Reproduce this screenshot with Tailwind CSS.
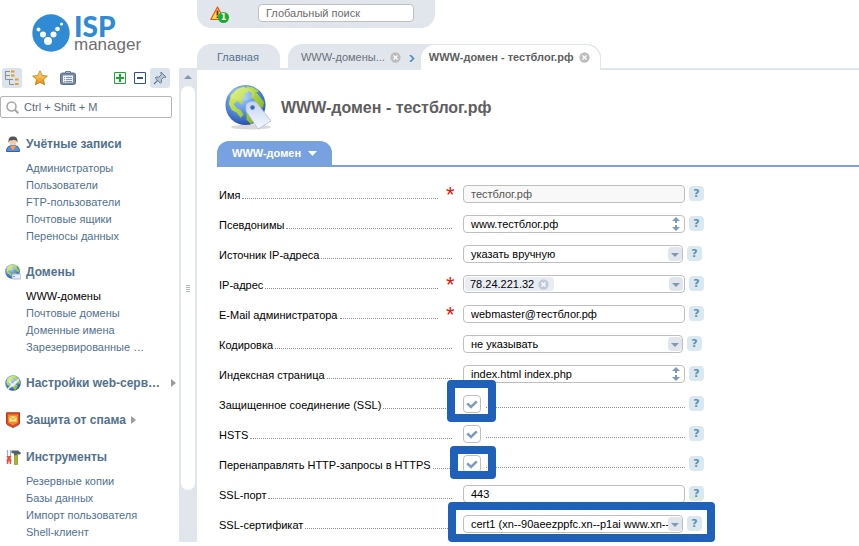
<!DOCTYPE html>
<html lang="ru">
<head>
<meta charset="utf-8">
<meta name="viewport" content="width=device-width, initial-scale=1">
<title>ISPmanager</title>
<script src="https://cdn.jsdelivr.net/npm/@tailwindcss/browser@4"></script>
</head>
<body class="bg-white font-['Liberation_Sans',Arial,sans-serif] text-[11px] leading-[17px] text-black">

<!-- Shared icons -->
<svg class="absolute size-0" aria-hidden="true">
  <defs>
    <radialGradient id="sea" cx="40%" cy="30%" r="75%"><stop offset="0" stop-color="#a8cffa"/><stop offset=".5" stop-color="#5a90e4"/><stop offset="1" stop-color="#2148a3"/></radialGradient>
    <linearGradient id="land" x1="0" y1="0" x2="1" y2="1"><stop offset="0" stop-color="#e3f56a"/><stop offset="1" stop-color="#6fae0c"/></linearGradient>
    <linearGradient id="tag" x1="0" y1="0" x2="0" y2="1"><stop offset="0" stop-color="#c3d4ef"/><stop offset="1" stop-color="#f6f9ff"/></linearGradient>
    <linearGradient id="gold" x1="0" y1="0" x2="0" y2="1"><stop offset="0" stop-color="#fde48a"/><stop offset="1" stop-color="#e88a05"/></linearGradient>
  </defs>
  <symbol id="globe" viewBox="0 0 42 42">
    <circle cx="21" cy="21" r="20.5" fill="url(#sea)"/>
    <path fill="url(#land)" d="M6 11l6-6 7-3 4 2 1 4-5 2 2 2-4 3 2 4-3 1-3-3-4 3 3 4 4 2 3 5-3 3-4-5-5-3-3-6zM22 2l7 1 6 4-3 1 4 5 4 5-1 6-5-2-4-6-3-3 1-4-5-3zM22 26l6-2 5 3-1 6-5 8-5-5z"/>
    <ellipse cx="17" cy="10" rx="13" ry="7" fill="#fff" opacity=".18"/>
  </symbol>
  <symbol id="updown" viewBox="0 0 8 14"><path fill="#7f9bbb" d="M4 0l4 4H5v2H3V4H0zM4 14l4-4H5V8H3v2H0z"/></symbol>
  <symbol id="down" viewBox="0 0 14 14"><rect width="14" height="14" rx="4" fill="#e1e6ed"/><path fill="#8197b8" d="M3 6h8l-4 4z"/></symbol>
  <symbol id="close" viewBox="0 0 12 12"><circle cx="6" cy="6" r="5.6" fill="currentColor"/><path d="M3.8 3.8l4.4 4.4M8.2 3.8L3.8 8.2" stroke="#fff" stroke-width="1.4"/></symbol>
  <symbol id="tri" viewBox="0 0 5 8"><path fill="#9b9b9b" d="M0 0l5 4-5 4z"/></symbol>
  <symbol id="check" viewBox="0 0 12 9"><path d="M1.2 3.4L5 7 10.8 1.4" fill="none" stroke="#7f9bbb" stroke-width="2.6"/></symbol>
</svg>

<div class="flex">
  <aside class="w-[179px] shrink-0">
    <a href="#" aria-label="ISP manager" class="flex h-[68px] items-start gap-1 pl-8 pt-[14px] leading-none">
      <svg class="size-[38px]" viewBox="0 0 38 38"><circle cx="19" cy="19" r="18.7" fill="#2f8bd4"/><g fill="#fff"><circle cx="6.500" cy="15.500" r="2"/><circle cx="11" cy="20.500" r="3"/><circle cx="16" cy="27" r="4"/><circle cx="21.500" cy="20.500" r="3"/><circle cx="25.500" cy="15" r="2.300"/><circle cx="29.500" cy="10" r="1.600"/></g></svg>
      <span class="flex flex-col">
        <span class="font-['Lato',sans-serif] text-[28px] font-black leading-6 text-[#2f8bd4]">ISP</span>
        <span class="font-['Liberation_Sans',sans-serif] text-[17px] leading-[14px] text-[#6f6f6f]">manager</span>
      </span>
    </a>
    <div class="flex h-5 items-center pl-[2px] pr-[9px]">
      <button type="button" aria-label="Дерево" class="flex size-5 items-center justify-center rounded-[3px] bg-[#dbe3ed]">
        <svg class="size-4" viewBox="0 0 16 16"><path d="M1.500 1v8.500M1.500 1.500H6M1.500 5.500H6M1.500 9.500H9M5.500 9.500v5M5.500 14.500H10" fill="none" stroke="#8b8f96"/><path fill="#e8a01c" d="M7 .500h3.500v2H7zM7 4.500h3.500v2H7zM11 8.500h3.500v2H11zM11 13h3.500v2H11z"/></svg>
      </button>
      <button type="button" aria-label="Избранное" class="ml-[10px]">
        <svg class="size-4" viewBox="0 0 16 16"><path d="M8 .8l2.200 4.700 5.200.6-3.900 3.500 1.100 5.200L8 12.300l-4.600 2.500 1.100-5.200L.6 6.100l5.200-.6z" fill="url(#gold)" stroke="#b8780f" stroke-width=".8"/></svg>
      </button>
      <button type="button" aria-label="История" class="ml-3">
        <svg class="size-4" viewBox="0 0 16 16"><path d="M5.500 3V1.500h5V3" fill="none" stroke="#6f8197"/><rect x=".5" y="3" width="15" height="11.500" rx="2" fill="#7489a3" stroke="#5a6d84"/><path d="M3 5.500h10v7H3z" fill="#edf2f7"/><path d="M4 7.500h1M6 7.500h6M4 9.500h1M6 9.500h6M4 11.500h1M6 11.500h6" stroke="#8495a9"/></svg>
      </button>
      <button type="button" aria-label="Развернуть всё" class="ml-auto">
        <svg class="size-3" viewBox="0 0 12 12"><path d="M.5.5h11v11H.5z" fill="#fff" stroke="#19a832"/><path d="M6 2v8M2 6h8" stroke="#19a832" stroke-width="2"/></svg>
      </button>
      <button type="button" aria-label="Свернуть всё" class="ml-2">
        <svg class="size-3" viewBox="0 0 12 12"><path d="M.5.5h11v11H.5z" fill="#fff" stroke="#2d5392"/><path d="M3 6h6" stroke="#2d5392" stroke-width="2"/></svg>
      </button>
      <button type="button" aria-label="Закрепить" class="ml-1 flex size-5 items-center justify-center rounded-[3px] bg-[#dbe3ed]">
        <svg class="size-[14px]" viewBox="0 0 14 14"><path d="M8 1l5 5-1.500.5-.8-.2-2.400 2.400.2 2.600-1 1L2.200 7l1-1 2.600.2 2.400-2.400L8 2.500z" fill="#b9c4d3" stroke="#66788f"/><path d="M4.500 9.500L1 13" stroke="#66788f" stroke-width="1.300"/></svg>
      </button>
    </div>
    <label class="mr-[7px] mt-2 flex h-[22px] items-center gap-[5px] rounded-[2px] border border-[#b5b5b5] pl-[5px]">
      <svg class="size-[13px] shrink-0" viewBox="0 0 13 13"><circle cx="5.500" cy="5.500" r="4.500" fill="none" stroke="#a5a5a5" stroke-width="1.500"/><path d="M8.800 8.800l3.500 3.500" stroke="#a5a5a5" stroke-width="2"/></svg>
      <input type="text" aria-label="Поиск по меню" placeholder="Ctrl + Shift + M" class="w-full min-w-0 outline-none placeholder:text-[#5c6b7c]">
    </label>

    <nav class="mt-4 flex flex-col gap-[17px] text-[#52718f]">
      <section>
        <h2 class="flex h-5 items-center gap-[5px] pl-[5px] text-[12px] font-bold">
          <svg class="size-4" viewBox="0 0 16 16"><path d="M1.500 15.500c0-4 2-6 6.500-6s6.500 2 6.500 6z" fill="#5c90df" stroke="#2f5fae"/><path d="M5 10l3 4.500 3-4.500z" fill="#ff9d3a"/><circle cx="8" cy="5.800" r="3.800" fill="#f4cda6"/><path d="M3.500 7C3 2 5 .5 8 .5s5 1.500 4.500 6.500C12 5 11 4 9.500 4S6 4.500 5 4.500 4 6 3.500 7z" fill="#555"/></svg>
          <a href="#">Учётные записи</a></h2>
        <ul class="mt-[6px] pl-[26px]">
          <li><a href="#">Администраторы</a></li>
          <li><a href="#">Пользователи</a></li>
          <li><a href="#">FTP-пользователи</a></li>
          <li><a href="#">Почтовые ящики</a></li>
          <li><a href="#">Переносы данных</a></li>
        </ul>
      </section>
      <section>
        <h2 class="flex h-5 items-center gap-[5px] pl-[5px] text-[12px] font-bold">
          <svg class="size-4" viewBox="0 0 16 16"><use href="#globe" width="15" height="15"/><rect x="7" y="10" width="9" height="5" rx="1" fill="#e9f0fb" stroke="#8fabd6" stroke-width=".8"/><circle cx="9" cy="12.500" r=".8" fill="#5680c0"/></svg>
          <a href="#">Домены</a></h2>
        <ul class="mt-[6px] pl-[26px]">
          <li><a href="#" class="text-black">WWW-домены</a></li>
          <li><a href="#">Почтовые домены</a></li>
          <li><a href="#">Доменные имена</a></li>
          <li><a href="#">Зарезервированные …</a></li>
        </ul>
      </section>
      <section>
        <h2 class="flex h-5 items-center gap-[5px] pl-[5px] pr-[3px] text-[12px] font-bold">
          <svg class="size-4 shrink-0" viewBox="0 0 16 16"><use href="#globe" width="16" height="16"/><path d="M4 6l4 5 6-7" fill="none" stroke="#dfe7f1" stroke-width="2"/><path d="M3 14l8-8" stroke="#eef3f9" stroke-width="1.500"/></svg>
          <a href="#" class="whitespace-nowrap">Настройки web-серв…</a>
          <svg class="ml-auto h-2 w-[5px] shrink-0"><use href="#tri"/></svg></h2>
      </section>
      <section>
        <h2 class="flex h-5 items-center gap-[5px] pl-[5px] text-[12px] font-bold">
          <svg class="size-4" viewBox="0 0 16 16"><path d="M1.500.8h13v10.500c0 1.700-3 2.500-6.500 4.200-3.500-1.700-6.500-2.500-6.500-4.200z" fill="#e2432c" stroke="#b93a12"/><path d="M3 2.500h10v8.300L8 13.500l-5-2.700z" fill="#f58a30"/><path d="M4 4h8v6H4z" fill="#fbe48b" stroke="#c98c16" stroke-width=".6"/><path d="M4 4l4 3.500L12 4" fill="none" stroke="#c98c16" stroke-width=".8"/></svg>
          <a href="#">Защита от спама</a>
          <svg class="h-2 w-[5px]"><use href="#tri"/></svg></h2>
      </section>
      <section>
        <h2 class="flex h-5 items-center gap-[5px] pl-[5px] text-[12px] font-bold">
          <svg class="size-4" viewBox="0 0 16 16"><path d="M2.500 1v6M5.500 1v6" stroke="#9fb3c8" stroke-width="1.300"/><path d="M1.500 7h5l-1 2.500 1 1.500-.5 4H4.800L4 11l-.8 4H2l-.5-4 1-1.500z" fill="#e2523c"/><path d="M6.500 1.500H13l3 2.500-1 1.500H12v1H9V4.500L6.500 4z" fill="#50606f"/><path d="M9.500 6h3v9.500h-3z" fill="#a8b820" stroke="#76820f" stroke-width=".6"/></svg>
          <a href="#">Инструменты</a></h2>
        <ul class="mt-[6px] pl-[26px]">
          <li><a href="#">Резервные копии</a></li>
          <li><a href="#">Базы данных</a></li>
          <li><a href="#">Импорт пользователя</a></li>
          <li><a href="#">Shell-клиент</a></li>
        </ul>
      </section>
    </nav>
  </aside>

  <!-- Scroll track between menu and page -->
  <div class="flex w-[18px] shrink-0 flex-col pt-[68px]">
    <div class="flex grow flex-col bg-[#e1e6ed] px-[2px] pb-[52px]">
      <button type="button" aria-label="Прокрутить вверх" class="flex h-[18px] items-center justify-center"><svg class="h-1 w-2" viewBox="0 0 8 4"><path fill="#8197b8" d="M4 0l4 4H0z"/></svg></button>
      <div class="flex grow items-center justify-center rounded-[7px] bg-white"><svg class="h-[7px] w-1" viewBox="0 0 4 7"><path d="M0 .5h4M0 2.500h4M0 4.500h4M0 6.500h4" stroke="#aab8ca"/></svg></div>
    </div>
  </div>

  <main class="min-w-0 grow pb-[3px]">
    <header class="flex h-7 w-[238px] items-start gap-[29px] rounded-b-[14px] bg-[#e1e6ed] pl-[13px] pt-[3px]">
      <button type="button" aria-label="Уведомления: 1" class="relative h-5 w-[19px] shrink-0">
        <svg class="size-[15px]" viewBox="0 0 15 15"><path d="M7.500 1l6.700 12.500H.8z" fill="#ffdf3d" stroke="#e0541f" stroke-width="1.200" stroke-linejoin="round"/><path d="M7.500 4.500v5M7.500 10.500V12" stroke="#7a1d0c" stroke-width="1.800"/></svg>
        <span class="absolute bottom-0 right-0 size-[11px] rounded-full bg-[#1bab30] text-center font-['DejaVu_Sans',sans-serif] text-[8px] font-bold leading-[11px] text-white">1</span>
      </button>
      <input type="search" aria-label="Глобальный поиск" placeholder="Глобальный поиск" class="mt-px h-[18px] w-[156px] rounded-[4px] border border-[#bfbfbf] bg-white px-[7px] outline-none placeholder:text-[#6b6b6b]">
    </header>

    <nav class="mt-4 flex h-[26px] items-end gap-2 border-b-2 border-[#e1e6ed]">
      <a href="#" class="flex h-6 items-center rounded-t-[14px] bg-[#e1e6ed] pl-5 pr-[21px] pt-[3px] text-[#52718f]">Главная</a>
      <div class="-mb-[2px] flex h-[26px] rounded-t-[14px] bg-[#e1e6ed] pl-[13px] pr-px pt-px">
        <a href="#" class="flex items-center text-[#6b7078]">WWW-домены...</a>
        <button type="button" aria-label="Закрыть вкладку" class="ml-[5px] text-[#bdbdbd]"><svg class="size-[11px]"><use href="#close"/></svg></button>
        <svg class="mx-2 mt-[10px] h-[7px] w-[6px]" viewBox="0 0 6 7"><path d="M1 0l3.500 3.500L1 7" fill="none" stroke="#4a8bb8" stroke-width="1.600"/></svg>
        <div class="-ml-[2px] flex items-center gap-[5px] rounded-t-[14px] bg-white pl-2 pr-[10px]">
          <a href="#" aria-current="page" class="font-bold text-[#5e5e5e]">WWW-домен - тестблог.рф</a>
          <button type="button" aria-label="Закрыть вкладку" class="text-[#bdbdbd]"><svg class="size-[11px]"><use href="#close"/></svg></button>
        </div>
      </div>
    </nav>

    <div class="flex h-[71px] items-center gap-2 pl-7 pt-[3px]">
      <svg class="h-[46px] w-12" viewBox="0 0 48 46"><ellipse cx="26" cy="43" rx="20" ry="2.500" fill="#000" opacity=".15"/><use href="#globe" width="41" height="42"/><path d="M21 21c1-3 8-5 11-2l14 18-13 8-12-18z" fill="url(#tag)" stroke="#a9bde0" stroke-width=".8"/><circle cx="27.500" cy="23.500" r="2.200" fill="#3c68b8"/></svg>
      <h1 class="text-[16px] font-bold text-[#5e5e5e]">WWW-домен - тестблог.рф</h1>
    </div>

    <div class="ml-5 flex border-b-2 border-[#78a2df]">
      <button type="button" class="flex h-6 items-center gap-[7px] rounded-t-[12px] bg-[#78a2df] px-[15px] font-bold text-white">WWW-домен <svg class="h-[5px] w-[9px]" viewBox="0 0 9 5"><path fill="#fff" d="M0 0h9L4.500 5z"/></svg></button>
    </div>

    <form class="pl-[22px] pt-3">
      <div class="flex h-[30px] items-center">
        <label for="name" class="flex w-[219px] items-baseline gap-[2px] pt-[2px]">Имя<span class="grow border-b border-dotted border-[#8c8c8c]"></span></label>
        <span class="w-[25px] pl-2 text-[22px] text-[#ee1111]">*</span>
        <input id="name" type="text" readonly value="тестблог.рф" class="h-[18px] w-[222px] rounded-[4px] border border-[#bfbfbf] bg-[#f8f8f8] px-[7px] text-[#555]">
        <button type="button" aria-label="Справка" class="mb-[2px] ml-1 size-[15px] rounded-[4px] bg-[#dbe8ef] font-['DejaVu_Sans',sans-serif] font-bold leading-[15px] text-[#5c91b0]">?</button>
      </div>
      <div class="flex h-[30px] items-center">
        <label for="alias" class="flex w-[233px] items-baseline gap-[2px] pt-[2px]">Псевдонимы<span class="grow border-b border-dotted border-[#8c8c8c]"></span></label>
        <span class="w-[11px]"></span>
        <span class="relative"><input id="alias" type="text" value="www.тестблог.рф" class="block h-[18px] w-[222px] rounded-[4px] border border-[#bfbfbf] pl-[7px] pr-4"><svg class="absolute right-[5px] top-[2px] h-[14px] w-2"><use href="#updown"/></svg></span>
        <button type="button" aria-label="Справка" class="mb-[2px] ml-1 size-[15px] rounded-[4px] bg-[#dbe8ef] font-['DejaVu_Sans',sans-serif] font-bold leading-[15px] text-[#5c91b0]">?</button>
      </div>
      <div class="flex h-[30px] items-center">
        <label for="source" class="flex w-[233px] items-baseline gap-[2px] pt-[2px]">Источник IP-адреса<span class="grow border-b border-dotted border-[#8c8c8c]"></span></label>
        <span class="w-[11px]"></span>
        <span class="relative"><select id="source" class="block h-[18px] w-[220px] appearance-none rounded-[4px] border border-[#bfbfbf] bg-white pl-[7px] pr-[14px] leading-4"><option>указать вручную</option></select><svg class="pointer-events-none absolute right-px top-[2px] size-[14px]"><use href="#down"/></svg></span>
        <button type="button" aria-label="Справка" class="mb-[2px] ml-1 size-[15px] rounded-[4px] bg-[#dbe8ef] font-['DejaVu_Sans',sans-serif] font-bold leading-[15px] text-[#5c91b0]">?</button>
      </div>
      <div class="flex h-[30px] items-center">
        <label for="ip" class="flex w-[219px] items-baseline gap-[2px] pt-[2px]">IP-адрес<span class="grow border-b border-dotted border-[#8c8c8c]"></span></label>
        <span class="w-[25px] pl-2 text-[22px] text-[#ee1111]">*</span>
        <div class="flex h-[18px] w-[222px] items-center rounded-[4px] border border-[#bfbfbf] px-px">
          <span class="flex h-[14px] items-center gap-1 rounded-[4px] bg-[#e9edf3] px-[5px]">78.24.221.32<button type="button" aria-label="Удалить адрес" class="text-[#c0cad9]"><svg class="size-[11px]"><use href="#close"/></svg></button></span>
          <input id="ip" type="text" class="w-0 min-w-0 grow outline-none">
          <button type="button" aria-label="Открыть список"><svg class="size-[14px]"><use href="#down"/></svg></button>
        </div>
        <button type="button" aria-label="Справка" class="mb-[2px] ml-1 size-[15px] rounded-[4px] bg-[#dbe8ef] font-['DejaVu_Sans',sans-serif] font-bold leading-[15px] text-[#5c91b0]">?</button>
      </div>
      <div class="flex h-[30px] items-center">
        <label for="email" class="flex w-[219px] items-baseline gap-[2px] pt-[2px]">E-Mail администратора<span class="grow border-b border-dotted border-[#8c8c8c]"></span></label>
        <span class="w-[25px] pl-2 text-[22px] text-[#ee1111]">*</span>
        <input id="email" type="text" value="webmaster@тестблог.рф" class="h-[18px] w-[222px] rounded-[4px] border border-[#bfbfbf] px-[7px]">
        <button type="button" aria-label="Справка" class="mb-[2px] ml-1 size-[15px] rounded-[4px] bg-[#dbe8ef] font-['DejaVu_Sans',sans-serif] font-bold leading-[15px] text-[#5c91b0]">?</button>
      </div>
      <div class="flex h-[30px] items-center">
        <label for="charset" class="flex w-[233px] items-baseline gap-[2px] pt-[2px]">Кодировка<span class="grow border-b border-dotted border-[#8c8c8c]"></span></label>
        <span class="w-[11px]"></span>
        <span class="relative"><select id="charset" class="block h-[18px] w-[220px] appearance-none rounded-[4px] border border-[#bfbfbf] bg-white pl-[7px] pr-[14px] leading-4"><option>не указывать</option></select><svg class="pointer-events-none absolute right-px top-[2px] size-[14px]"><use href="#down"/></svg></span>
        <button type="button" aria-label="Справка" class="mb-[2px] ml-1 size-[15px] rounded-[4px] bg-[#dbe8ef] font-['DejaVu_Sans',sans-serif] font-bold leading-[15px] text-[#5c91b0]">?</button>
      </div>
      <div class="flex h-[30px] items-center">
        <label for="index" class="flex w-[233px] items-baseline gap-[2px] pt-[2px]">Индексная страница<span class="grow border-b border-dotted border-[#8c8c8c]"></span></label>
        <span class="w-[11px]"></span>
        <span class="relative"><input id="index" type="text" value="index.html index.php" class="block h-[18px] w-[222px] rounded-[4px] border border-[#bfbfbf] pl-[7px] pr-4"><svg class="absolute right-[5px] top-[2px] h-[14px] w-2"><use href="#updown"/></svg></span>
        <button type="button" aria-label="Справка" class="mb-[2px] ml-1 size-[15px] rounded-[4px] bg-[#dbe8ef] font-['DejaVu_Sans',sans-serif] font-bold leading-[15px] text-[#5c91b0]">?</button>
      </div>
      <div class="flex h-[30px] items-center">
        <label for="ssl" class="flex w-[233px] items-baseline gap-[2px] pt-[2px]">Защищенное соединение (SSL)<span class="grow border-b border-dotted border-[#8c8c8c]"></span></label>
        <span class="w-[11px]"></span>
        <span class="relative flex w-[222px] items-center gap-[5px]">
          <input id="ssl" type="checkbox" checked class="size-[18px] appearance-none rounded-[4px] border border-[#bfbfbf]">
          <svg class="pointer-events-none absolute left-[3px] top-[5px] h-[9px] w-3"><use href="#check"/></svg>
          <span class="mt-[7px] grow border-b border-dotted border-[#8c8c8c]"></span>
          <span class="pointer-events-none absolute -left-4 -top-[15px] z-10 h-[42px] w-[49px] rounded-[4px] border-8 border-[#1f60bb]"></span>
        </span>
        <button type="button" aria-label="Справка" class="mb-[2px] ml-1 size-[15px] rounded-[4px] bg-[#dbe8ef] font-['DejaVu_Sans',sans-serif] font-bold leading-[15px] text-[#5c91b0]">?</button>
      </div>
      <div class="flex h-[30px] items-center">
        <label for="hsts" class="flex w-[233px] items-baseline gap-[2px] pt-[2px]">HSTS<span class="grow border-b border-dotted border-[#8c8c8c]"></span></label>
        <span class="w-[11px]"></span>
        <span class="relative flex w-[222px] items-center gap-[5px]">
          <input id="hsts" type="checkbox" checked class="size-[18px] appearance-none rounded-[4px] border border-[#bfbfbf]">
          <svg class="pointer-events-none absolute left-[3px] top-[5px] h-[9px] w-3"><use href="#check"/></svg>
          <span class="mt-[7px] grow border-b border-dotted border-[#8c8c8c]"></span>
        </span>
        <button type="button" aria-label="Справка" class="mb-[2px] ml-1 size-[15px] rounded-[4px] bg-[#dbe8ef] font-['DejaVu_Sans',sans-serif] font-bold leading-[15px] text-[#5c91b0]">?</button>
      </div>
      <div class="flex h-[30px] items-center">
        <label for="redirect" class="flex w-[233px] items-baseline gap-[2px] whitespace-nowrap pt-[2px]">Перенаправлять HTTP-запросы в HTTPS<span class="grow border-b border-dotted border-[#8c8c8c]"></span></label>
        <span class="w-[11px]"></span>
        <span class="relative flex w-[222px] items-center gap-[5px]">
          <input id="redirect" type="checkbox" checked class="size-[18px] appearance-none rounded-[4px] border border-[#bfbfbf]">
          <svg class="pointer-events-none absolute left-[3px] top-[5px] h-[9px] w-3"><use href="#check"/></svg>
          <span class="mt-[7px] grow border-b border-dotted border-[#8c8c8c]"></span>
          <span class="pointer-events-none absolute -left-[13px] -top-[9px] z-10 h-[33px] w-[46px] rounded-[4px] border-8 border-[#1f60bb]"></span>
        </span>
        <button type="button" aria-label="Справка" class="mb-[2px] ml-1 size-[15px] rounded-[4px] bg-[#dbe8ef] font-['DejaVu_Sans',sans-serif] font-bold leading-[15px] text-[#5c91b0]">?</button>
      </div>
      <div class="flex h-[30px] items-center">
        <label for="port" class="flex w-[233px] items-baseline gap-[2px] pt-[2px]">SSL-порт<span class="grow border-b border-dotted border-[#8c8c8c]"></span></label>
        <span class="w-[11px]"></span>
        <input id="port" type="text" value="443" class="h-[18px] w-[222px] rounded-[4px] border border-[#bfbfbf] px-[7px]">
        <button type="button" aria-label="Справка" class="mb-[2px] ml-1 size-[15px] rounded-[4px] bg-[#dbe8ef] font-['DejaVu_Sans',sans-serif] font-bold leading-[15px] text-[#5c91b0]">?</button>
      </div>
      <div class="flex h-[30px] items-center">
        <label for="cert" class="flex w-[233px] items-baseline gap-[2px] pt-[2px]">SSL-сертификат<span class="grow border-b border-dotted border-[#8c8c8c]"></span></label>
        <span class="w-[11px]"></span>
        <span class="relative"><select id="cert" class="block h-[18px] w-[220px] appearance-none rounded-[4px] border border-[#bfbfbf] bg-white pl-[7px] pr-[14px] leading-4"><option>cert1 (xn--90aeezppfc.xn--p1ai www.xn--</option></select><svg class="pointer-events-none absolute right-px top-[2px] size-[14px]"><use href="#down"/></svg>
          <span class="pointer-events-none absolute -left-[15px] -top-[13px] z-10 h-10 w-[267px] rounded-[4px] border-8 border-[#1f60bb]"></span>
        </span>
        <button type="button" aria-label="Справка" class="mb-[2px] ml-1 size-[15px] rounded-[4px] bg-[#dbe8ef] font-['DejaVu_Sans',sans-serif] font-bold leading-[15px] text-[#5c91b0]">?</button>
      </div>
    </form>
  </main>
</div>
</body>
</html>
